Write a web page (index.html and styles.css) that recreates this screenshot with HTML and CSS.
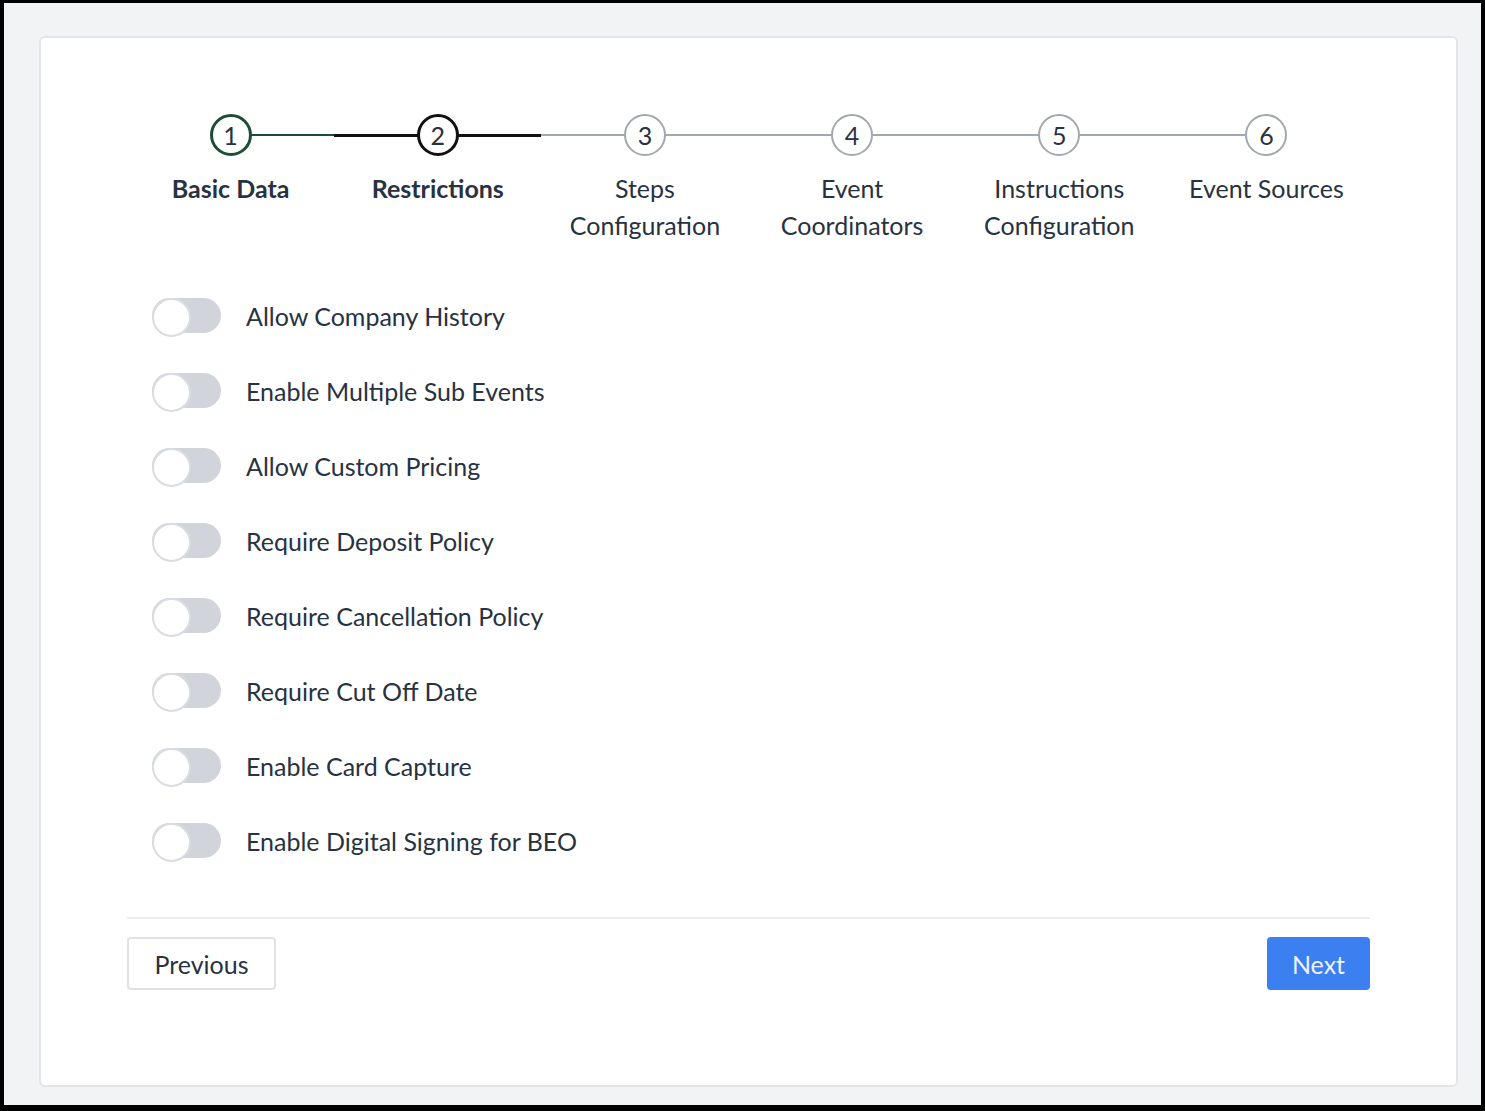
FILE: index.html
```html
<!DOCTYPE html>
<html lang="en">
<head>
<meta charset="UTF-8">
<title>Event Setup - Restrictions</title>
<link rel="stylesheet" href="styles.css">
</head>
<body>
<div class="frame">
<div class="card">

<div class="stepper">
<div class="step done">
<div class="circle">1</div>
<div class="label">Basic Data</div>
</div>
<div class="step active">
<div class="circle">2</div>
<div class="label">Restrictions</div>
</div>
<div class="step">
<div class="circle">3</div>
<div class="label">Steps Configuration</div>
</div>
<div class="step">
<div class="circle">4</div>
<div class="label">Event Coordinators</div>
</div>
<div class="step">
<div class="circle">5</div>
<div class="label">Instructions Configuration</div>
</div>
<div class="step">
<div class="circle">6</div>
<div class="label">Event Sources</div>
</div>
</div>

<div class="options">
<label class="row"><span class="switch"></span>Allow Company History</label>
<label class="row"><span class="switch"></span>Enable Multiple Sub Events</label>
<label class="row"><span class="switch"></span>Allow Custom Pricing</label>
<label class="row"><span class="switch"></span>Require Deposit Policy</label>
<label class="row"><span class="switch"></span>Require Cancellation Policy</label>
<label class="row"><span class="switch"></span>Require Cut Off Date</label>
<label class="row"><span class="switch"></span>Enable Card Capture</label>
<label class="row"><span class="switch"></span>Enable Digital Signing for BEO</label>
</div>

<div class="footer">
<button class="btn prev">Previous</button>
<button class="btn next">Next</button>
</div>

</div>
</div>
</body>
</html>
```

FILE: styles.css
```css
*{
    box-sizing:border-box;
    margin:0;
    padding:0;
}
body{
    background:#000;
    font-family:Lato, "Open Sans", sans-serif;
    color:#283241;
}
.frame{
    margin:3px 4px 0 4px;
    width:1477px;
    height:1102px;
    background:#f1f3f5;
    padding:33px 23px 18px 35px;
}
.card{
    height:1051px;
    background:#fff;
    border:2px solid #e3e5e9;
    border-radius:6px;
    padding:76px 86px 0 86px;
}

/* stepper */
.stepper{
    display:flex;
}
.step{
    flex:1;
    position:relative;
    text-align:center;
}
.step:before,
.step:after{
    content:'';
    position:absolute;
    top:20px;
    height:2px;
    width:50%;
    background:#a3a8b0;
}
.step:before{ left:0; }
.step:after{ right:0; }
.step:first-child:before,
.step:last-child:after{
    display:none;
}
.circle{
    position:relative;
    z-index:1;
    width:42px;
    height:42px;
    margin:0 auto;
    border-radius:50%;
    border:2px solid #a3a8b0;
    background:#fff;
    font-size:25px;
    line-height:38px;
}
.label{
    margin-top:14px;
    font-size:25px;
    line-height:37px;
    padding:0 4px;
}
.step.done .circle{
    border:3px solid #1d4d37;
    line-height:36px;
}
.step.done:after{
    background:#1d4d37;
}
.step.active .circle{
    border:3px solid #111;
    line-height:36px;
}
.step.active:before,
.step.active:after{
    background:#111;
    height:3px;
}
.step.done .label,
.step.active .label{
    font-weight:bold;
}

/* toggles */
.options{
    margin-top:34px;
    padding-left:25px;
}
.row{
    display:flex;
    align-items:center;
    gap:25px;
    height:75px;
    font-size:25px;
}
.switch{
    position:relative;
    width:69px;
    height:35px;
    border-radius:18px;
    background:#d1d5db;
}
.switch:before{
    content:'';
    position:absolute;
    left:0;
    top:0;
    width:35px;
    height:35px;
    border-radius:50%;
    background:#fff;
    border:2px solid #d9dce1;
}

/* footer */
.footer{
    margin-top:39px;
    border-top:2px solid #eaecef;
    padding-top:18px;
    display:flex;
    justify-content:space-between;
}
.btn{
    height:53px;
    border-radius:4px;
    font-family:Lato, "Open Sans", sans-serif;
    font-size:25px;
    cursor:pointer;
}
.prev{
    width:149px;
    background:#fff;
    border:2px solid #e0e2e6;
    color:#283241;
}
.next{
    width:103px;
    background:#3b7ff0;
    border:none;
    color:#eef3ff;
}
```
